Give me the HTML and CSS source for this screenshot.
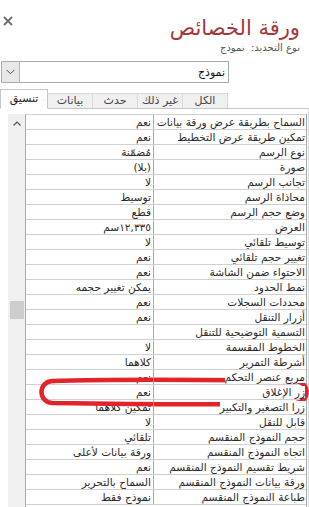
FILE: index.html
```html
<!DOCTYPE html>
<html lang="ar" dir="rtl">
<head>
    <meta charset="UTF-8">
    <meta name="viewport" content="width=device-width, initial-scale=1.0">
    <title>ورقة الخصائص</title>
    <link rel="stylesheet" href="styles.css">
</head>
<body>
    <div class="sheet">
        <div class="header">
            <div class="titles">
                <h1>ورقة الخصائص</h1>
                <p class="selection">نوع التحديد:&nbsp; نموذج</p>
            </div>
            <svg class="close" width="10" height="10" viewBox="0 0 10 10">
                <path d="M1 1 L9 9 M9 1 L1 9" stroke="#6d6d6d" stroke-width="1.8" fill="none"/>
            </svg>
        </div>

        <div class="combo">
            <span class="combo-text">نموذج</span>
            <span class="combo-btn">
                <svg width="9" height="6" viewBox="0 0 9 6">
                    <path d="M0.5 0.8 L4.5 4.8 L8.5 0.8" stroke="#555" stroke-width="1" fill="none"/>
                </svg>
            </span>
        </div>

        <div class="tabs">
            <span class="tab">الكل</span>
            <span class="tab">غير ذلك</span>
            <span class="tab">حدث</span>
            <span class="tab">بيانات</span>
            <span class="tab active">تنسيق</span>
        </div>

        <div class="page">
            <div class="grid" id="grid">
                <!-- rows are filled by the script below -->
            </div>
            <div class="scrollbar">
                <span class="arrow">
                    <svg width="8" height="5" viewBox="0 0 8 5">
                        <path d="M0.5 4.5 L4 1 L7.5 4.5" stroke="#555" stroke-width="1.2" fill="none"/>
                    </svg>
                </span>
                <span class="thumb"></span>
            </div>
        </div>
    </div>

    <!-- red hand-drawn mark round the close button row -->
    <svg class="mark" width="272" height="30" viewBox="0 0 272 30">
        <path d="M14 4 C80 2 190 3 258 4 C272 5 272 25 258 26 C190 28 80 27 14 26 C0 25 0 5 14 4 Z"
              stroke="#e2232a" stroke-width="4.5" fill="none"/>
    </svg>

    <script>
        const properties = [
            ["السماح بطريقة عرض ورقة بيانات", "نعم"],
            ["تمكين طريقة عرض التخطيط", "نعم"],
            ["نوع الرسم", "مُضمّنة"],
            ["صورة", "(بلا)"],
            ["تجانب الرسم", "لا"],
            ["محاذاة الرسم", "توسيط"],
            ["وضع حجم الرسم", "قطع"],
            ["العرض", "١٢,٣٣٥سم"],
            ["توسيط تلقائي", "لا"],
            ["تغيير حجم تلقائي", "نعم"],
            ["الاحتواء ضمن الشاشة", "نعم"],
            ["نمط الحدود", "يمكن تغيير حجمه"],
            ["محددات السجلات", "نعم"],
            ["أزرار التنقل", "نعم"],
            ["التسمية التوضيحية للتنقل", ""],
            ["الخطوط المقسمة", "لا"],
            ["أشرطة التمرير", "كلاهما"],
            ["مربع عنصر التحكم", "نعم"],
            ["زر الإغلاق", "نعم"],
            ["زرا التصغير والتكبير", "تمكين كلاهما"],
            ["قابل للنقل", "لا"],
            ["حجم النموذج المنقسم", "تلقائي"],
            ["اتجاه النموذج المنقسم", "ورقة بيانات لأعلى"],
            ["شريط تقسيم النموذج المنقسم", "نعم"],
            ["ورقة بيانات النموذج المنقسم", "السماح بالتحرير"],
            ["طباعة النموذج المنقسم", "نموذج فقط"]
        ];

        const grid = document.getElementById('grid');
        grid.innerHTML = properties.map(([name, value]) => `
            <div class="row">
                <div class="name"><span>${name}</span></div>
                <div class="value">${value}</div>
            </div>
        `).join('');
    </script>
</body>
</html>
```

FILE: styles.css
```css
/* Property sheet */
html, body {
    margin: 0;
    padding: 0;
    background-color: #ffffff;
    overflow: hidden;
}

body {
    font-family: "DejaVu Sans", "Noto Sans", sans-serif;
    font-size: 11px;
    color: #222;
    width: 309px;
    height: 507px;
    position: relative;
}

.header {
    display: flex;
    justify-content: space-between;
    align-items: flex-start;
    height: 61px;
}

.titles {
    padding: 16px 9px 0 0;
}

h1 {
    margin: 0;
    font-size: 21px;
    font-weight: normal;
    line-height: 25px;
    color: #a4373a;
}

.selection {
    margin: 0;
    font-size: 10px;
    line-height: 14px;
    color: #555;
}

.close {
    margin: 16px 0 0 3px;
}

/* combo box */
.combo {
    display: flex;
    justify-content: space-between;
    align-items: center;
    width: 228px;
    height: 22px;
    box-sizing: border-box;
    margin-left: 1px;
    margin-right: auto;
    border: 1px solid #ababab;
}

.combo-text {
    padding-right: 3px;
    color: #111;
}

.combo-btn {
    display: flex;
    align-items: center;
    justify-content: center;
    width: 17px;
    height: 20px;
    background-color: #e8e8e8;
    border-right: 1px solid #b5b5b5;
}

/* tabs */
.tabs {
    display: flex;
    align-items: flex-end;
    width: 228px;
    height: 25px;
    margin-left: 0;
    margin-right: auto;
}

.tab {
    width: 45px;
    height: 15px;
    box-sizing: border-box;
    line-height: 14px;
    text-align: center;
    color: #444;
    background-color: #f0f0f0;
    border: 1px solid #d9d9d9;
    border-bottom: none;
    border-left: none;
}

.tab.active {
    width: 48px;
    height: 20px;
    line-height: 18px;
    background-color: #fff;
    color: #222;
    border: 1px solid #c6c6c6;
    border-bottom: 1px solid #fff;
    margin-bottom: -1px;
    position: relative;
}

/* tab page with grid */
.page {
    display: flex;
    width: 303px;
    height: 400px;
    box-sizing: border-box;
    padding: 5px 1px 0 2px;
    border-top: 1px solid #c6c6c6;
    border-right: 1px solid #dcdcdc;
}

.grid {
    width: 282px;
    border-top: 1px solid #d0d0d0;
    border-right: 1px solid #a9a9a9;
    border-left: 1px solid #a9a9a9;
    box-sizing: border-box;
}

.row {
    display: grid;
    grid-template-columns: 153px 1fr;
    height: 15px;
    box-sizing: border-box;
    border-bottom: 1px solid #d0d0d0;
    font-size: 10.6px;
    line-height: 14px;
    color: #2a2a2a;
    white-space: nowrap;
}

.name {
    border-left: 1px solid #a9a9a9;
    padding-right: 1px;
    position: relative;
    z-index: 1;
}

.name span {
    background-color: #fff;
}

.value {
    padding-right: 2px;
}

.scrollbar {
    width: 17px;
    background-color: #f0f0f0;
    display: flex;
    flex-direction: column;
    align-items: center;
}

.arrow {
    display: flex;
    align-items: center;
    justify-content: center;
    width: 15px;
    height: 15px;
    margin-top: 2px;
}

.thumb {
    width: 14px;
    height: 18px;
    margin-top: 170px;
    background-color: #cdcdcd;
}

.mark {
    position: absolute;
    left: 38px;
    top: 377px;
}
```
